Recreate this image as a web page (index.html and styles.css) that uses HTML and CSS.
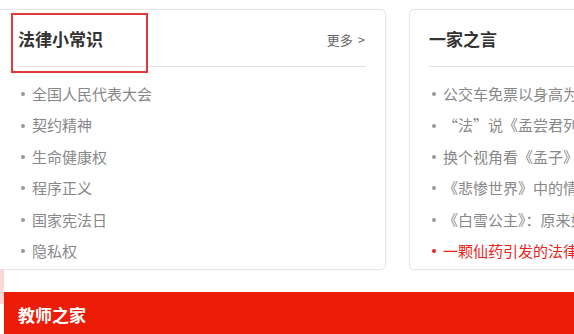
FILE: index.html
```html
<!DOCTYPE html>
<html lang="zh">
<head>
<meta charset="utf-8">
<link rel="stylesheet" href="styles.css">
</head>
<body>
<div class="page">
  <div class="cards">
    <div class="card card-left">
      <div class="card-head">
        <h2 class="card-title">法律小常识</h2>
        <a class="more">更多 &gt;</a>
      </div>
      <ul class="list">
        <li>全国人民代表大会</li>
        <li>契约精神</li>
        <li>生命健康权</li>
        <li>程序正义</li>
        <li>国家宪法日</li>
        <li>隐私权</li>
      </ul>
      <div class="highlight"></div>
    </div>
    <div class="card card-right">
      <div class="card-head">
        <h2 class="card-title">一家之言</h2>
      </div>
      <ul class="list">
        <li>公交车免票以身高为准合理吗</li>
        <li>“法”说《孟尝君列传》</li>
        <li>换个视角看《孟子》</li>
        <li>《悲惨世界》中的情与法</li>
        <li>《白雪公主》：原来如此</li>
        <li class="active">一颗仙药引发的法律思考</li>
      </ul>
    </div>
  </div>
  <div class="strip"></div>
  <div class="bar">
    <h2 class="bar-title">教师之家</h2>
  </div>
</div>
</body>
</html>
```
FILE: styles.css
```css
* { box-sizing: border-box; }
html, body { margin: 0; padding: 0; }
body {
  width: 574px;
  height: 334px;
  overflow: hidden;
  background: #fff;
  font-family: "Microsoft YaHei", "Noto Sans CJK SC", "Noto Sans", sans-serif;
}
.page { position: relative; width: 574px; height: 334px; }
.cards {
  display: flex;
  gap: 23px;
  padding-top: 9px;
  margin-left: -10px;
}
.card {
  position: relative;
  flex: none;
  height: 261px;
  border: 1px solid #e6e6e6;
  border-radius: 5px;
  background: #fff;
  box-shadow: 0 0 3px rgba(0,0,0,0.04);
}
.card-left { width: 396px; padding: 0 19px 0 27px; }
.card-right { width: 300px; padding: 0 0 0 19px; overflow: hidden; }
.card-head {
  height: 57px;
  display: flex;
  align-items: center;
  justify-content: space-between;
  border-bottom: 1px solid #e2e2e2;
  padding-top: 1px;
}
.card-title {
  margin: 0;
  font-size: 17px;
  font-weight: bold;
  color: #333;
  letter-spacing: 0;
}
.more {
  font-size: 13px;
  color: #666;
  margin-top: 1px;
  margin-right: 1px;
  word-spacing: 2px;
}
.list {
  list-style: none;
  margin: 0;
  padding: 11px 0 0 0;
}
.list li {
  height: 31.4px;
  line-height: 31.4px;
  font-size: 15px;
  color: #888;
  white-space: nowrap;
  display: flex;
  align-items: center;
}
.list li::before {
  content: "";
  width: 4px;
  height: 4px;
  border-radius: 50%;
  background: #999;
  margin: 1px 7px 0 3px;
  flex: none;
}
.list li.active { color: #e8251a; }
.list li.active::before { background: #e8251a; }
.highlight {
  position: absolute;
  left: 20px;
  top: 3px;
  width: 137px;
  height: 60px;
  border: 2px solid #e23a3a;
}
.strip {
  position: absolute;
  left: 0;
  top: 269px;
  width: 4px;
  height: 35px;
  background: #fbd7d5;
}
.bar {
  margin: 22px 0 0 4px;
  height: 43px;
  background: #ec1c06;
  display: flex;
  align-items: center;
  padding-left: 14px;
}
.bar-title {
  margin: 0;
  color: #fff;
  font-size: 17px;
  font-weight: bold;
  padding-top: 2px;
}
```
